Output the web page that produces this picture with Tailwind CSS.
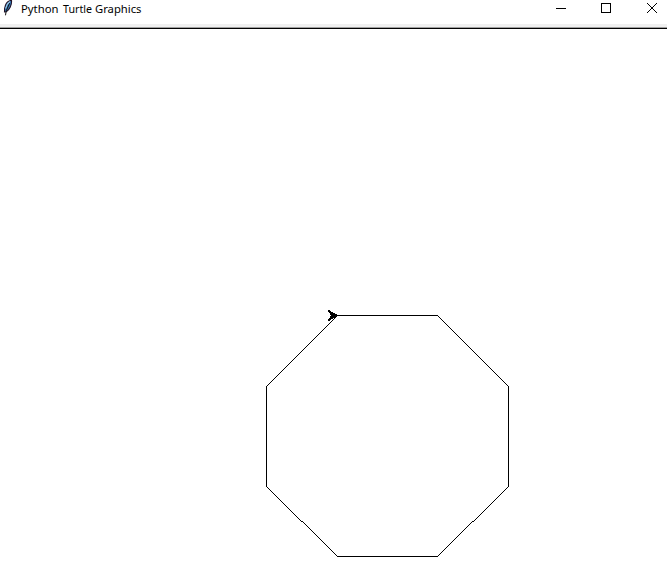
<!DOCTYPE html>
<html lang="en">
<head>
<meta charset="utf-8">
<title>Python Turtle Graphics</title>
<script src="https://cdn.jsdelivr.net/npm/@tailwindcss/browser@4"></script>
</head>
<body class="flex h-screen flex-col overflow-hidden bg-white text-black">
  <header class="flex h-6 shrink-0 items-start justify-between bg-white">
    <div class="flex items-start">
      <svg class="h-[18px] w-[21px]" viewBox="0 0 21 18" fill="none">
        <path d="M11.5 .3C8 .8 5.2 4.2 4.6 8.5L4.5 12L6.3 11.8C9.5 9.8 12 5 11.5.3Z" fill="#3579b5" stroke="#211329" stroke-width="1.1"/>
        <path d="M9.8 1.6C7.6 3.2 6.3 5.5 5.6 8.5" stroke="#a9d5f0" stroke-width="1.1"/>
        <path d="M9.6 3.2L6.2 10.8L5.5 15.3" stroke="#111" stroke-width="1"/>
      </svg>
      <h1 class="w-[122px] pt-px font-['Noto_Sans','Open_Sans',sans-serif] text-[11.5px] leading-4 whitespace-nowrap"><svg class="block h-4 w-[122px] overflow-visible"><text y="12" fill="#000"><tspan x="0" textLength="37.5" lengthAdjust="spacingAndGlyphs">Python</tspan> <tspan x="42" textLength="29" lengthAdjust="spacingAndGlyphs">Turtle</tspan> <tspan x="74" textLength="46.5" lengthAdjust="spacingAndGlyphs">Graphics</tspan></text></svg></h1>
    </div>
    <div class="flex pr-[9px]">
      <svg class="h-4 w-[46px]" viewBox="0 0 46 16" shape-rendering="crispEdges"><path d="M36 8h10v1H36z"/></svg>
      <svg class="h-4 w-[46px]" viewBox="0 0 46 16" fill="none" stroke="#000" shape-rendering="crispEdges"><path d="M35.5 3.5h9v9h-9z"/></svg>
      <svg class="h-4 w-[46px]" viewBox="0 0 46 16" fill="none" stroke="#000"><path d="M35 3l10 10M45 3L35 13"/></svg>
    </div>
  </header>
  <div class="h-[3px] shrink-0 bg-[#f0f0f0]"></div>
  <div class="h-px shrink-0 bg-[#a0a0a0]"></div>
  <div class="h-px shrink-0 bg-black"></div>
  <main class="min-h-0 flex-1">
    <svg class="block h-[556px] w-[667px]" viewBox="0 29 667 556" fill="none" stroke="#000" shape-rendering="crispEdges">
      <path d="M337.5 315.5H437.5L508.5 386.5V486.5L473.5 521.5L472.5 521.5L437.5 556.5H337.5L302.5 521.5L301.5 521.5L266.5 486.5V386.5Z"/>
      <path d="M338 315.5L328.5 310.5L331.2 315.5L328.5 320.5Z" fill="#000" stroke-linejoin="round"/>
    </svg>
  </main>
</body>
</html>
